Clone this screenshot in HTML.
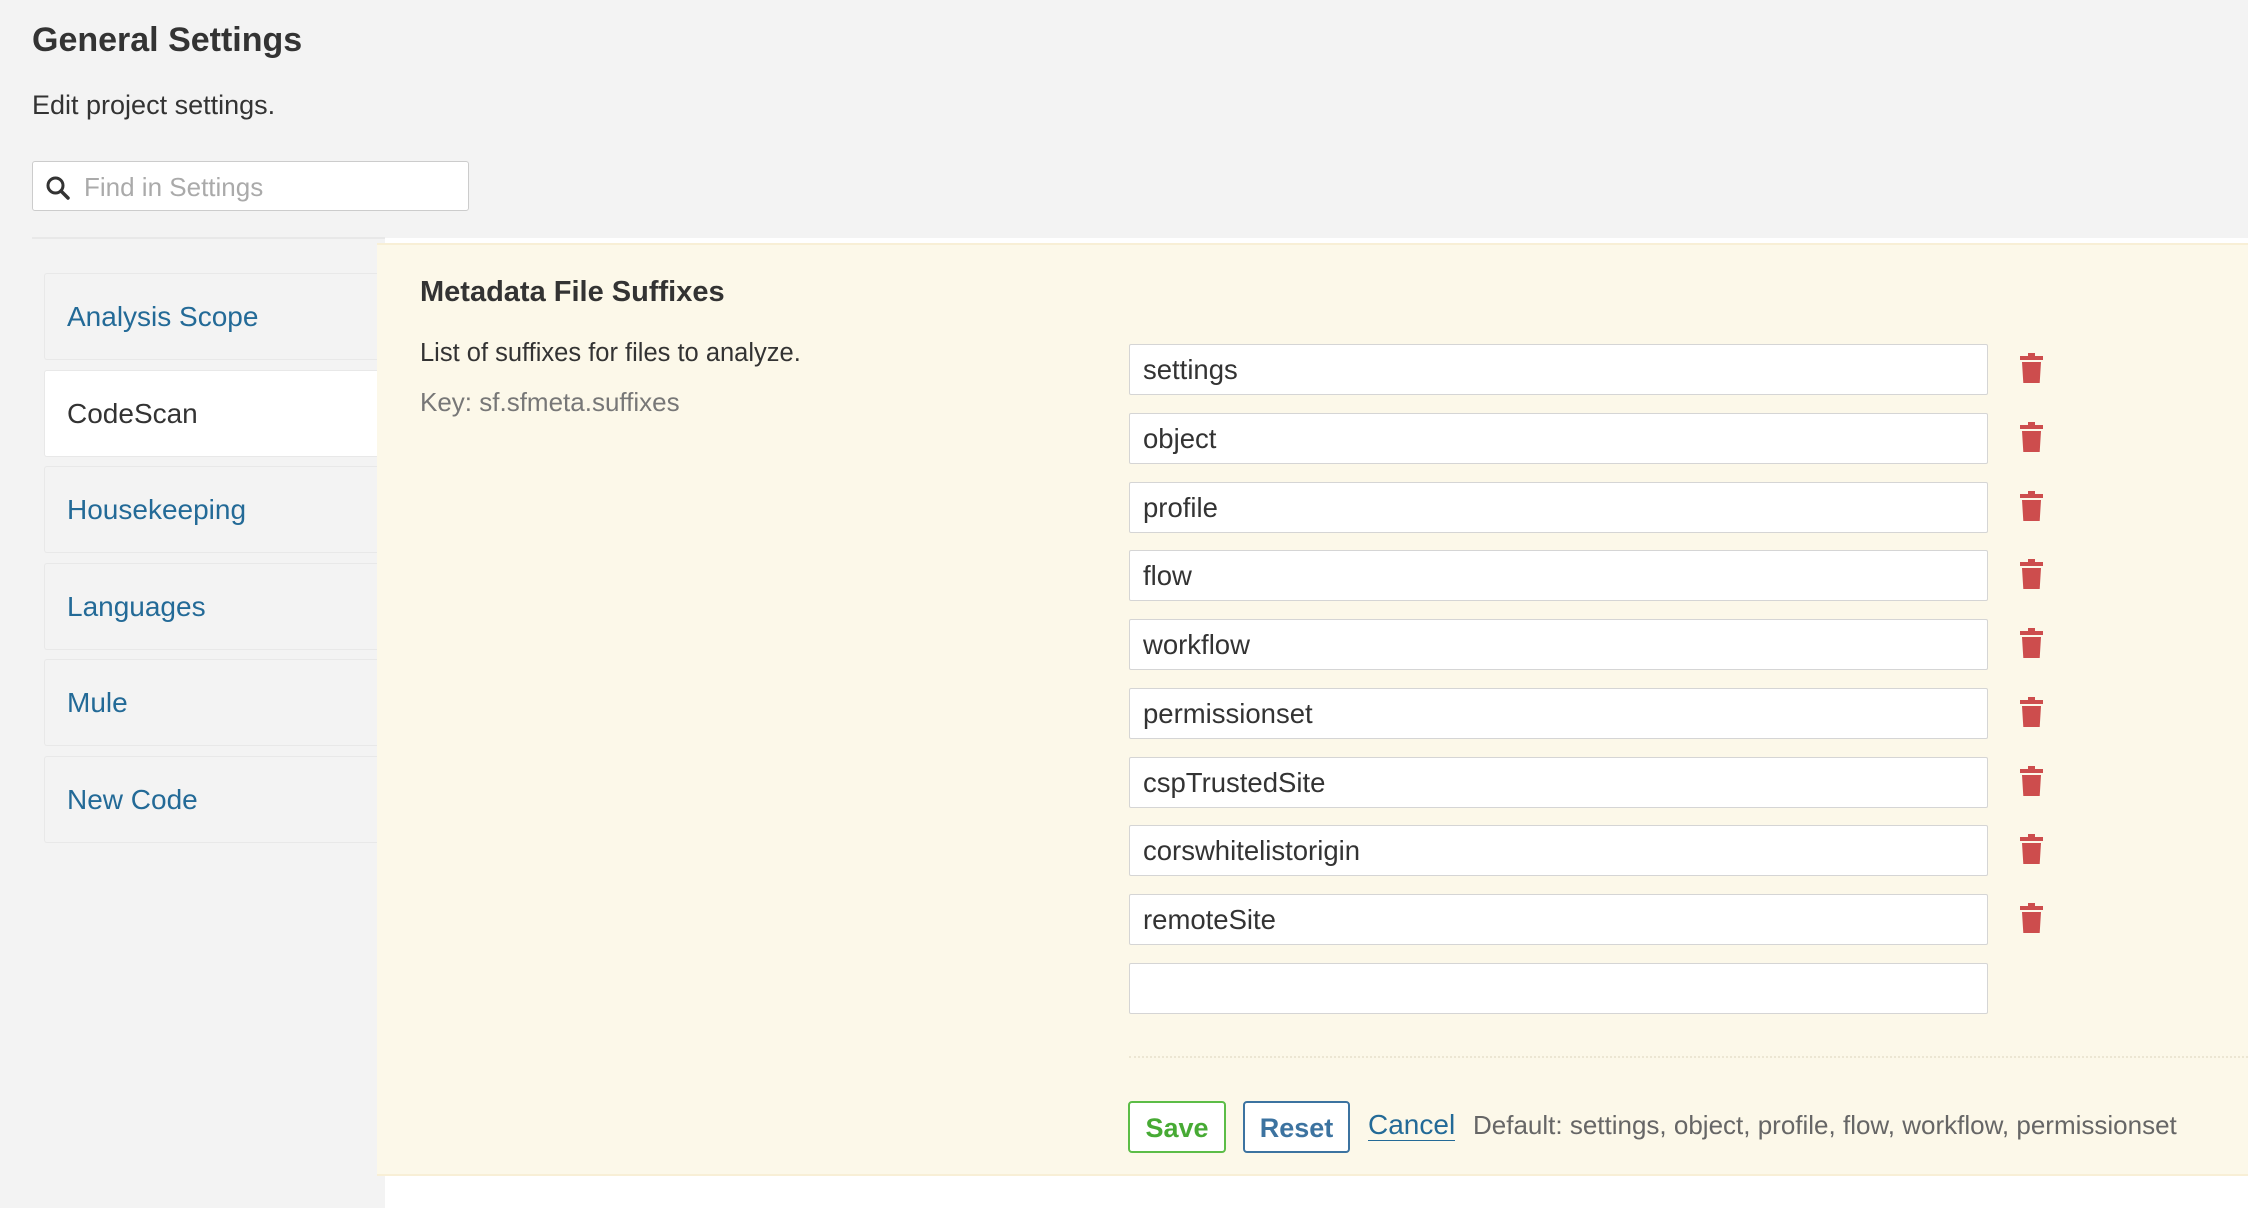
<!DOCTYPE html>
<html><head><meta charset="utf-8"><style>
*{box-sizing:border-box;margin:0;padding:0}
body{width:2248px;height:1218px;background:#fff;font-family:"Liberation Sans",Arial,sans-serif;position:relative;overflow:hidden;color:#333}
.top{position:absolute;left:0;top:0;width:2248px;height:238px;background:#f3f3f3}
.left{position:absolute;left:0;top:238px;width:385px;height:970px;background:#f3f3f3}
.divl{position:absolute;left:32px;top:237px;width:353px;height:2px;background:#e8e8e8}
h1{position:absolute;left:32px;top:21px;font-size:34px;font-weight:bold;color:#333}
.sub{position:absolute;left:32px;top:90px;font-size:27px;color:#333}
.search{position:absolute;left:32px;top:161px;width:437px;height:50px;background:#fff;border:1px solid #ccc;border-radius:3px}
.search span{position:absolute;left:51px;top:10px;font-size:26px;color:#aaa}
.item{position:absolute;left:44px;width:345px;height:87px;border:1px solid #e8e8e8;border-right:none;border-radius:3px 0 0 3px;background:#f3f3f3;font-size:28px;color:#236a97;padding-left:22px;line-height:85px}
.item.act{background:#fff;color:#333}
.panel{position:absolute;left:377px;top:243px;width:1871px;height:933px;background:#fcf8e9;border-top:2px solid #f8efd6;border-bottom:2px solid #f8efd6}
.mt{position:absolute;left:420px;top:276px;font-size:29px;font-weight:bold;color:#333}
.desc{position:absolute;left:420px;top:339px;font-size:25.5px;color:#333}
.key{position:absolute;left:420px;top:387px;font-size:26px;color:#777}
.inp{position:absolute;left:1129px;width:859px;height:51px;background:#fff;border:1px solid #d5d5d5;border-radius:2px;font-size:27.5px;color:#333;padding-left:13px;line-height:49px}
.trash{position:absolute;left:2020px;width:23px;height:32px}
.dot{position:absolute;left:1129px;top:1056px;width:1119px;border-top:2px dotted #ece6d3}
.btn{position:absolute;top:1101px;height:52px;border-radius:4px;font-weight:bold;font-size:27px;text-align:center;line-height:50px;background:#fff}
.save{left:1128px;width:98px;border:2px solid #5cbd47;color:#47aa34}
.reset{left:1243px;width:107px;border:2px solid #3c73a0;color:#3c73a0}
.cancel{position:absolute;left:1368px;top:1110px;font-size:28px;color:#236a97;border-bottom:1px solid #236a97;line-height:30px}
.def{position:absolute;left:1473px;top:1110px;font-size:26px;color:#666;line-height:30px}
</style></head><body>
<div class="top"></div><div class="left"></div><div class="divl"></div>
<h1>General Settings</h1>
<div class="sub">Edit project settings.</div>
<div class="search"><svg style="position:absolute;left:12px;top:13px" width="26" height="26" viewBox="0 0 26 26"><circle cx="10.5" cy="10.5" r="7.5" fill="none" stroke="#333" stroke-width="3"/><line x1="16" y1="16" x2="23" y2="23" stroke="#333" stroke-width="3.5" stroke-linecap="round"/></svg><span>Find in Settings</span></div>
<div class="item" style="top:273px">Analysis Scope</div>
<div class="item act" style="top:370px">CodeScan</div>
<div class="item" style="top:466px">Housekeeping</div>
<div class="item" style="top:563px">Languages</div>
<div class="item" style="top:659px">Mule</div>
<div class="item" style="top:756px">New Code</div>
<div class="panel"></div>
<div class="mt">Metadata File Suffixes</div>
<div class="desc">List of suffixes for files to analyze.</div>
<div class="key">Key: sf.sfmeta.suffixes</div>
<div class="inp" style="top:344px">settings</div>
<div class="inp" style="top:413px">object</div>
<div class="inp" style="top:482px">profile</div>
<div class="inp" style="top:550px">flow</div>
<div class="inp" style="top:619px">workflow</div>
<div class="inp" style="top:688px">permissionset</div>
<div class="inp" style="top:757px">cspTrustedSite</div>
<div class="inp" style="top:825px">corswhitelistorigin</div>
<div class="inp" style="top:894px">remoteSite</div>
<div class="inp" style="top:963px"></div>
<svg class="trash" style="top:352px" viewBox="0 0 23 32"><path d="M8 1h7v3h8v4H0V4h8z M2 10h19l-1.3 21H3.3z" fill="#cd4d4d"/></svg>
<svg class="trash" style="top:421px" viewBox="0 0 23 32"><path d="M8 1h7v3h8v4H0V4h8z M2 10h19l-1.3 21H3.3z" fill="#cd4d4d"/></svg>
<svg class="trash" style="top:490px" viewBox="0 0 23 32"><path d="M8 1h7v3h8v4H0V4h8z M2 10h19l-1.3 21H3.3z" fill="#cd4d4d"/></svg>
<svg class="trash" style="top:558px" viewBox="0 0 23 32"><path d="M8 1h7v3h8v4H0V4h8z M2 10h19l-1.3 21H3.3z" fill="#cd4d4d"/></svg>
<svg class="trash" style="top:627px" viewBox="0 0 23 32"><path d="M8 1h7v3h8v4H0V4h8z M2 10h19l-1.3 21H3.3z" fill="#cd4d4d"/></svg>
<svg class="trash" style="top:696px" viewBox="0 0 23 32"><path d="M8 1h7v3h8v4H0V4h8z M2 10h19l-1.3 21H3.3z" fill="#cd4d4d"/></svg>
<svg class="trash" style="top:765px" viewBox="0 0 23 32"><path d="M8 1h7v3h8v4H0V4h8z M2 10h19l-1.3 21H3.3z" fill="#cd4d4d"/></svg>
<svg class="trash" style="top:833px" viewBox="0 0 23 32"><path d="M8 1h7v3h8v4H0V4h8z M2 10h19l-1.3 21H3.3z" fill="#cd4d4d"/></svg>
<svg class="trash" style="top:902px" viewBox="0 0 23 32"><path d="M8 1h7v3h8v4H0V4h8z M2 10h19l-1.3 21H3.3z" fill="#cd4d4d"/></svg>
<div class="dot"></div>
<div class="btn save">Save</div>
<div class="btn reset">Reset</div>
<div class="cancel">Cancel</div>
<div class="def">Default: settings, object, profile, flow, workflow, permissionset</div>
</body></html>
